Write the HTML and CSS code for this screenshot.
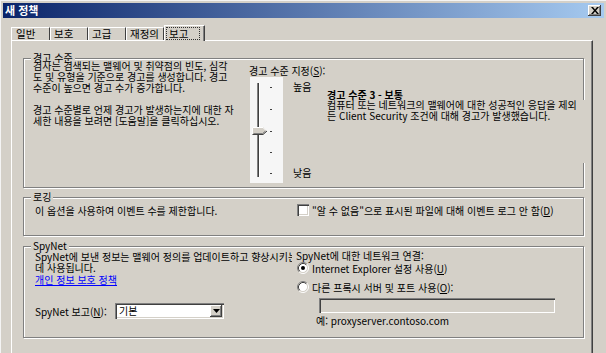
FILE: index.html
```html
<!DOCTYPE html>
<html lang="ko">
<head>
<meta charset="utf-8">
<title>새 정책</title>
<link rel="stylesheet" href="styles.css">
</head>
<body>
<div class="win">
  <div class="titlebar">
    <span class="title">새 정책</span>
    <span class="close"><svg width="8" height="7" viewBox="0 0 8 7"><path d="M0 0h2l2 2.5L6 0h2L5 3.5 8 7H6L4 4.5 2 7H0l3-3.5z" fill="#000"/></svg></span>
  </div>
  <div class="tabs">
    <div class="tab first">일반</div>
    <div class="tab">보호</div>
    <div class="tab">고급</div>
    <div class="tab">재정의</div>
    <div class="tab sel"><span class="focus">보고</span></div>
  </div>
  <div class="panel">
    <div class="group g1">
      <div class="legend">경고 수준</div>
      <div class="g1body">
        <div class="g1left">
          <p>검사는 검색되는 맬웨어 및 취약점의 빈도, 심각<br>도 및 유형을 기준으로 경고를 생성합니다. 경고<br>수준이 높으면 경고 수가 증가합니다.</p>
          <p>경고 수준별로 언제 경고가 발생하는지에 대한 자<br>세한 내용을 보려면 [도움말]을 클릭하십시오.</p>
        </div>
        <div class="g1right">
          <div class="lbl">경고 수준 지정(<u>S</u>):</div>
          <div class="sliderrow">
            <div class="slider">
              <svg width="33" height="106" viewBox="0 0 33 106">
                <rect x="7" y="6" width="1" height="94" fill="#808080"/>
                <rect x="8" y="6" width="1" height="94" fill="#404040"/>
                <rect x="9" y="6" width="1" height="94" fill="#ffffff"/>
                <rect x="20" y="10" width="2" height="1" fill="#404040"/>
                <rect x="20" y="32" width="2" height="1" fill="#404040"/>
                <rect x="20" y="54" width="2" height="1" fill="#404040"/>
                <rect x="20" y="75" width="2" height="1" fill="#404040"/>
                <rect x="20" y="96" width="2" height="1" fill="#404040"/>
                <polygon points="2,50 13,50 17,54 13,58 2,58" fill="#d4d0c8"/>
                <polyline points="2.5,57.5 2.5,50.5 13,50.5 16.5,54" fill="none" stroke="#ffffff" stroke-width="1"/>
                <polyline points="2.5,57.5 13,57.5 17,54" fill="none" stroke="#404040" stroke-width="1"/>
                <polyline points="3.5,56.5 12.5,56.5 15.5,54" fill="none" stroke="#808080" stroke-width="1"/>
              </svg>
            </div>
            <div class="hilo"><span>높음</span><span>낮음</span></div>
            <div class="desc">
              <div class="desc-title">경고 수준 3 - 보통</div>
              <div class="desc-body">컴퓨터 또는 네트워크의 맬웨어에 대한 성공적인 응답을 제외<br>든 Client Security 조건에 대해 경고가 발생했습니다.</div>
            </div>
          </div>
        </div>
      </div>
    </div>

    <div class="group g2">
      <div class="legend">로깅</div>
      <div class="g2body">
        <div class="txt">이 옵션을 사용하여 이벤트 수를 제한합니다.</div>
        <div class="chkrow"><span class="chk"></span><span class="chklbl">"알 수 없음"으로 표시된 파일에 대해 이벤트 로그 안 함(<u>D</u>)</span></div>
      </div>
    </div>

    <div class="group g3">
      <div class="legend">SpyNet</div>
      <div class="g3body">
        <div class="g3left">
          <div class="line">SpyNet에 보낸 정보는 맬웨어 정의를 업데이트하고 향상시키는</div>
          <div class="line">데 사용됩니다.</div>
          <div class="line link">개인 정보 보호 정책</div>
          <div class="comborow">
            <span class="combolbl">SpyNet 보고(<u>N</u>):</span>
            <span class="combo"><span class="combotxt">기본</span><span class="dropbtn"><svg width="7" height="4" viewBox="0 0 7 4"><path d="M0 0h7L3.5 4z" fill="#000"/></svg></span></span>
          </div>
        </div>
        <div class="g3right">
          <div class="line">SpyNet에 대한 네트워크 연결:</div>
          <div class="radiorow r1">
            <svg class="radio" width="12" height="12" viewBox="0 0 12 12">
              <circle cx="6" cy="6" r="4.5" fill="#ffffff"/>
              <path d="M2.11 9.89A5.5 5.5 0 0 1 9.89 2.11" fill="none" stroke="#808080"/>
              <path d="M9.89 2.11A5.5 5.5 0 0 1 2.11 9.89" fill="none" stroke="#ffffff"/>
              <path d="M2.82 9.18A4.5 4.5 0 0 1 9.18 2.82" fill="none" stroke="#404040"/>
              <path d="M9.18 2.82A4.5 4.5 0 0 1 2.82 9.18" fill="none" stroke="#d4d0c8"/>
              <circle cx="6" cy="6" r="2" fill="#000000"/>
            </svg>
            <span class="rlbl">Internet Explorer 설정 사용(<u>U</u>)</span>
          </div>
          <div class="radiorow r2">
            <svg class="radio" width="12" height="12" viewBox="0 0 12 12">
              <circle cx="6" cy="6" r="4.5" fill="#ffffff"/>
              <path d="M2.11 9.89A5.5 5.5 0 0 1 9.89 2.11" fill="none" stroke="#808080"/>
              <path d="M9.89 2.11A5.5 5.5 0 0 1 2.11 9.89" fill="none" stroke="#ffffff"/>
              <path d="M2.82 9.18A4.5 4.5 0 0 1 9.18 2.82" fill="none" stroke="#404040"/>
              <path d="M9.18 2.82A4.5 4.5 0 0 1 2.82 9.18" fill="none" stroke="#d4d0c8"/>
            </svg>
            <span class="rlbl">다른 프록시 서버 및 포트 사용(<u>O</u>):</span>
          </div>
          <div class="textbox"></div>
          <div class="line example">예: proxyserver.contoso.com</div>
        </div>
      </div>
    </div>
  </div>
</div>
</body>
</html>
```
FILE: styles.css
```css
html, body {
  margin: 0;
  padding: 0;
  background: #d4d0c8;
}
body {
  font-family: "Noto Sans CJK KR", "Noto Sans", sans-serif;
  font-size: 10px;
  color: #000;
}
u { text-decoration: underline; }

.win {
  width: 606px;
  height: 353px;
  overflow: hidden;
  box-sizing: border-box;
  padding: 2px 2px 0 2px;
  border-top: 1px solid #f4f4f4;
  border-left: 1px solid #f4f4f4;
  background: #d4d0c8;
}

.titlebar {
  height: 15px;
  display: flex;
  align-items: center;
  padding-left: 2px;
  background: linear-gradient(to right, #0a246a, #a6caf0);
}
.title {
  color: #fff;
  font-weight: bold;
  font-size: 11px;
  line-height: 15px;
}
.close {
  margin-left: auto;
  margin-right: 3px;
  width: 13px;
  height: 11px;
  box-sizing: border-box;
  background: #d4d0c8;
  box-shadow: inset -1px -1px #404040, inset 1px 1px #fff, inset -2px -2px #808080;
  display: flex;
  align-items: center;
  justify-content: center;
}

.tabs {
  height: 22px;
  display: flex;
  align-items: flex-end;
  padding-left: 8px;
}
.tab {
  width: 38px;
  height: 13px;
  box-sizing: border-box;
  border-top: 1px solid #fff;
  border-left: 1px solid #fff;
  border-right: 1px solid #404040;
  padding-left: 3px;
  line-height: 12px;
  font-size: 10.5px;
  white-space: nowrap;
}
.tab.first { width: 39px; padding-left: 4px; }
.tab.sel {
  width: 41px;
  height: 16px;
  margin-bottom: -1px;
  position: relative;
  z-index: 1;
  background: #d4d0c8;
  box-shadow: inset -1px 0 #808080;
  padding: 1px 0 0 1px;
}
.focus {
  display: block;
  width: 34px;
  height: 13px;
  box-sizing: border-box;
  border: 1px dotted #303030;
  padding-left: 2px;
  line-height: 11px;
}

.panel {
  margin-left: 8px;
  width: 582px;
  height: 330px;
  box-sizing: border-box;
  border-top: 1px solid #fff;
  border-left: 1px solid #fff;
  border-right: 1px solid #404040;
  box-shadow: inset -1px 0 #808080;
  padding: 17px 8px 0 11px;
}

.group {
  box-sizing: border-box;
  width: 561px;
  border: 1px solid #808080;
  box-shadow: inset 1px 1px #fff, 1px 1px #fff;
}
.g1 { height: 130px; margin-bottom: 9px; }
.g2 { height: 39px; margin-bottom: 10px; }
.g3 { height: 92px; }

.legend {
  display: table;
  margin: -7px 0 -5px 7px;
  padding: 0 2px;
  background: #d4d0c8;
  line-height: 12px;
}

/* group 1 */
.g1body {
  display: flex;
  align-items: flex-start;
}
.g1left {
  flex-shrink: 0;
  width: 216px;
  margin-left: 9px;
  padding-top: 1px;
  line-height: 11px;
  white-space: nowrap;
}
.g1left p { margin: 0; }
.g1left p + p { margin-top: 10.5px; }
.g1right {
  flex-shrink: 0;
  padding-top: 6px;
}
.lbl { line-height: 11px; }
.sliderrow {
  display: flex;
  align-items: flex-start;
  margin-top: 1px;
}
.slider {
  flex-shrink: 0;
  width: 33px;
  height: 106px;
  margin-left: 1px;
  background: #f6f6f6;
}
.slider svg { display: block; }
.hilo {
  flex-shrink: 0;
  height: 106px;
  box-sizing: border-box;
  padding: 4px 0 5px;
  margin-left: 10px;
  width: 20px;
  display: flex;
  flex-direction: column;
  justify-content: space-between;
  line-height: 11px;
  white-space: nowrap;
}
.desc {
  margin-left: 14px;
  margin-top: 12.5px;
  flex-shrink: 0;
  white-space: nowrap;
}
.desc-title {
  font-weight: bold;
  line-height: 10.5px;
}
.desc-body {
  width: 262px;
  height: 63px;
  line-height: 10.5px;
  background: #d4d0c8;
}

/* group 2 */
.g2body {
  display: grid;
  grid-template-columns: 261px 1fr;
  align-items: center;
  padding: 6px 0 0 11px;
  line-height: 11px;
  white-space: nowrap;
}
.chkrow {
  display: flex;
  align-items: center;
}
.chk {
  flex-shrink: 0;
  width: 12px;
  height: 12px;
  margin-left: 1px;
  box-sizing: border-box;
  background: #fff;
  box-shadow: inset 1px 1px #808080, inset 2px 2px #404040, inset -1px -1px #fff, inset -2px -2px #d4d0c8;
}
.chklbl { margin-left: 3px; }

/* group 3 */
.g3body {
  display: grid;
  grid-template-columns: 257px 1fr;
  column-gap: 4px;
  padding-left: 11px;
  white-space: nowrap;
}
.line { line-height: 11px; }
.g3left {
  overflow: hidden;
  padding-top: 3.5px;
}
.link {
  color: #0000ff;
  text-decoration: underline;
  margin-top: 1px;
}
.comborow {
  display: flex;
  align-items: center;
  margin-top: 18.5px;
}
.combolbl { width: 80px; flex-shrink: 0; }
.combo {
  flex-shrink: 0;
  width: 109px;
  height: 16px;
  box-sizing: border-box;
  background: #fff;
  box-shadow: inset 1px 1px #808080, inset 2px 2px #404040, inset -1px -1px #fff, inset -2px -2px #d4d0c8;
  display: flex;
  align-items: center;
  padding: 2px;
}
.combotxt {
  flex: 1;
  padding-left: 2px;
  line-height: 12px;
}
.dropbtn {
  width: 12px;
  height: 12px;
  box-sizing: border-box;
  background: #d4d0c8;
  box-shadow: inset -1px -1px #404040, inset 1px 1px #fff, inset -2px -2px #808080;
  display: flex;
  align-items: center;
  justify-content: center;
}
.dropbtn svg { display: block; }

.g3right { padding-top: 2.5px; }
.radiorow {
  display: flex;
  align-items: center;
  height: 13px;
}
.radiorow.r1 { margin-top: 1px; }
.radiorow.r2 { margin-top: 6px; }
.radio { display: block; margin-left: 1px; flex-shrink: 0; }
.rlbl { margin-left: 3px; line-height: 11px; }
.textbox {
  width: 236px;
  height: 15px;
  margin: 4.5px 0 0 23px;
  box-sizing: border-box;
  background: #d4d0c8;
  box-shadow: inset 1px 1px #808080, inset 2px 2px #404040, inset -1px -1px #fff, inset -2px -2px #d4d0c8;
}
.example {
  margin: 1.5px 0 0 20px;
}
```
